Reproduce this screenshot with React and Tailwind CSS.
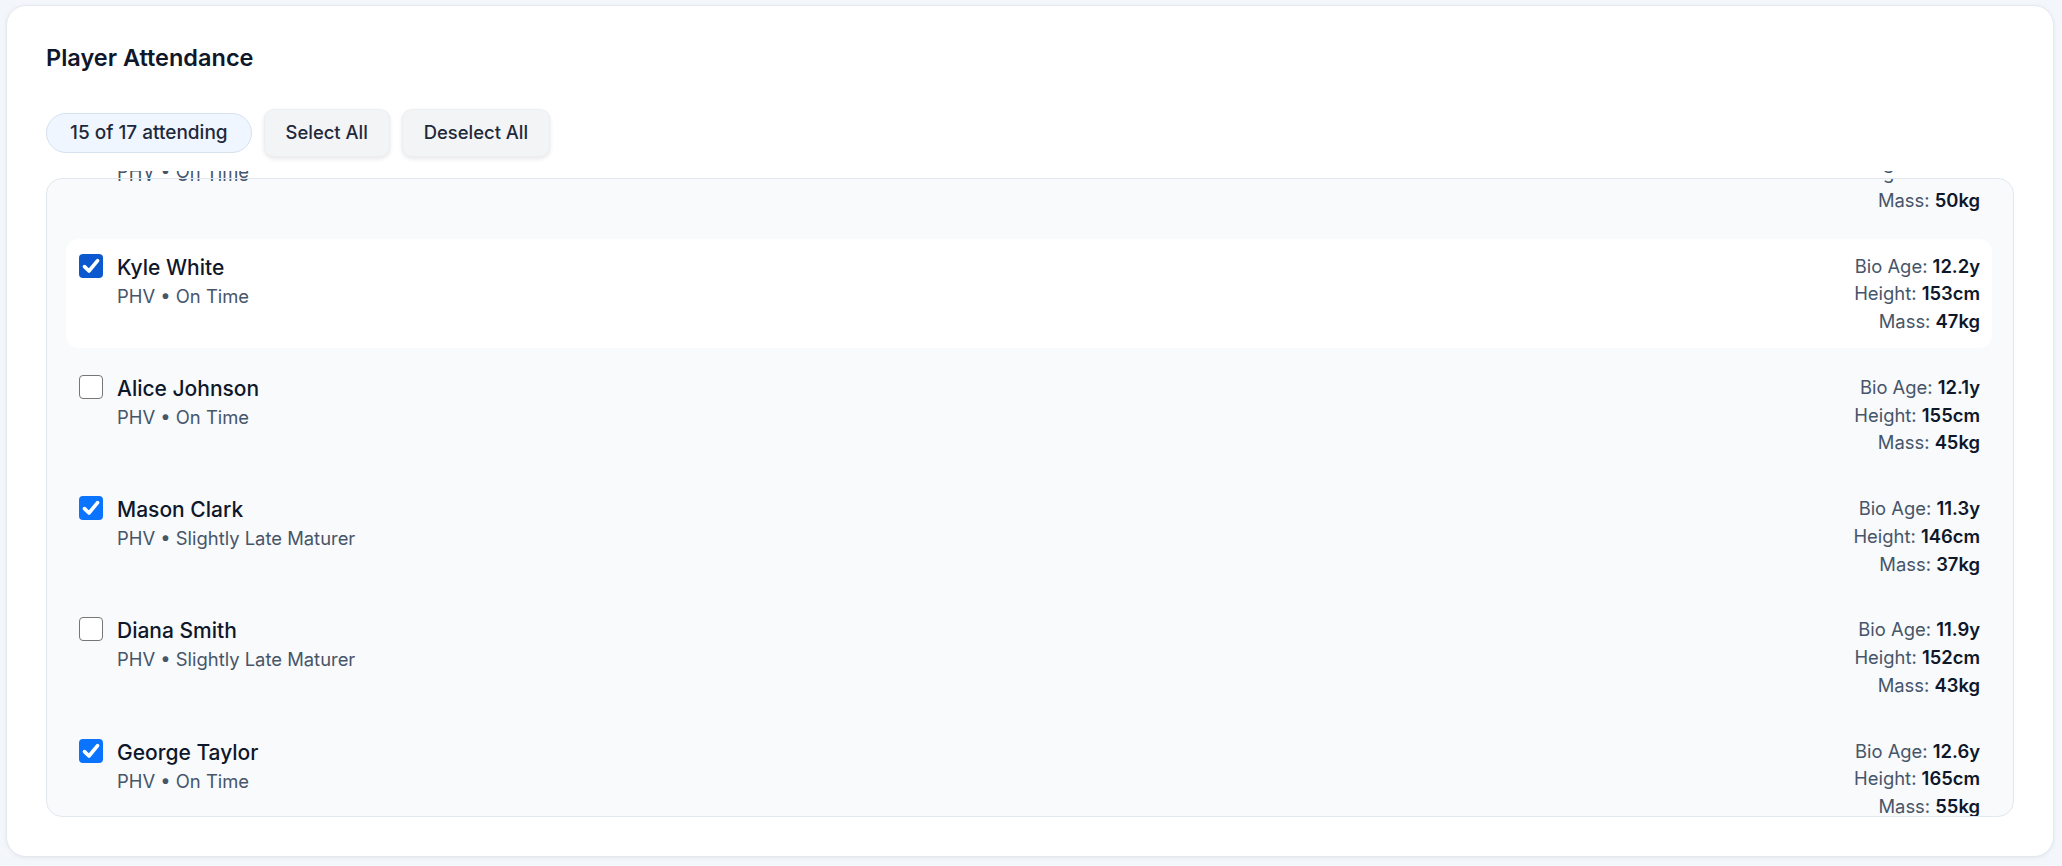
import React from 'react';

const players = [
  { name: 'Ethan Brown', status: 'On Time', age: '12.4y', height: '158cm', mass: '50kg', checked: true },
  { name: 'Kyle White', status: 'On Time', age: '12.2y', height: '153cm', mass: '47kg', checked: true, active: true },
  { name: 'Alice Johnson', status: 'On Time', age: '12.1y', height: '155cm', mass: '45kg', checked: false },
  { name: 'Mason Clark', status: 'Slightly Late Maturer', age: '11.3y', height: '146cm', mass: '37kg', checked: true },
  { name: 'Diana Smith', status: 'Slightly Late Maturer', age: '11.9y', height: '152cm', mass: '43kg', checked: false },
  { name: 'George Taylor', status: 'On Time', age: '12.6y', height: '165cm', mass: '55kg', checked: true },
  { name: 'Noah Wilson', status: 'Early Maturer', age: '12.9y', height: '161cm', mass: '52kg', checked: true },
];

function Checkbox({ checked, active }) {
  if (!checked) {
    return <span className="mt-[1px] block w-[24px] h-[24px] shrink-0 rounded-[4px] border-[1.5px] border-[#767676] bg-white" />;
  }
  return (
    <span className={`mt-[1px] flex w-[24px] h-[24px] shrink-0 items-center justify-center rounded-[4px] ${active ? 'bg-[#0b58cf]' : 'bg-[#0a74ff]'}`}>
      <svg viewBox="0 0 24 24" className="w-[24px] h-[24px]" fill="none">
        <path d="M5.5 12.6 L10 17 L18.6 6.6" stroke="white" strokeWidth="3.6" strokeLinecap="round" strokeLinejoin="round" />
      </svg>
    </span>
  );
}

function Stat({ label, value }) {
  return (
    <div className="leading-[27.7px] text-[18.4px] text-[#475569]">
      {label}: <span className="font-semibold text-[#0f172a]">{value}</span>
    </div>
  );
}

function PlayerRow({ p }) {
  return (
    <div className={`flex h-[109px] shrink-0 items-start justify-between rounded-[13px] pl-[13px] pr-[12px] pt-[14px] ${p.active ? 'bg-white' : ''}`}>
      <div className="flex items-start gap-[14px]">
        <Checkbox checked={p.checked} active={p.active} />
        <div className="flex flex-col">
          <span className="text-[21px] leading-[29px] font-medium text-[#0f172a]">{p.name}</span>
          <span className="text-[18.4px] leading-[28px] text-[#475569]">PHV • {p.status}</span>
        </div>
      </div>
      <div className="flex flex-col items-end">
        <Stat label="Bio Age" value={p.age} />
        <Stat label="Height" value={p.height} />
        <Stat label="Mass" value={p.mass} />
      </div>
    </div>
  );
}

export default function App() {
  const prev = players[0];
  return (
    <div className="min-h-screen bg-[#f3f6fa] pl-[6px] pr-[8px] pt-[5px] pb-[9px] font-[family-name:Inter,'Noto_Sans',sans-serif]">
      <div className="rounded-[20px] border border-[#e3e9f1] bg-white p-[39px] shadow-[0_1px_4px_rgba(15,23,42,0.06)]">
        <h2 className="text-[23.5px] leading-[26px] font-semibold text-[#0f172a]">Player Attendance</h2>

        {/* Controls */}
        <div className="mt-[38px] flex h-[48px] items-center gap-[12px]">
          <span className="flex h-[40px] items-center rounded-full border border-[#d6e1ee] bg-[#eff6ff] px-[23px] text-[19px] font-medium text-[#1e293b]">
            15 of 17 attending
          </span>
          <button className="h-[48px] rounded-[10px] border border-[#eceef2] bg-[#f3f4f6] px-[21px] text-[18.4px] font-medium text-[#1e293b] shadow-[0_2px_4px_rgba(15,23,42,0.1)]">
            Select All
          </button>
          <button className="h-[48px] rounded-[10px] border border-[#eceef2] bg-[#f3f4f6] px-[21px] text-[18.4px] font-medium text-[#1e293b] shadow-[0_2px_4px_rgba(15,23,42,0.1)]">
            Deselect All
          </button>
        </div>

        {/* Scrolled-off tail of the previous row */}
        <div className="mt-[14px] flex h-[7px] items-start justify-between overflow-hidden border-x border-transparent pl-[19px] pr-[21px]">
          <div className="mt-[-14.5px] pl-[51px] text-[18.4px] leading-[28px] text-[#475569]">PHV • {prev.status}</div>
          <div className="mt-[-22px] pr-[12px]">
            <Stat label="Height" value={prev.height} />
          </div>
        </div>

        {/* Player list */}
        <div className="h-[639px] overflow-hidden rounded-[16px] border border-[#e2e8f0] bg-[#f8fafc] pl-[19px] pr-[21px]">
          <div className="mt-[-61.8px] flex flex-col gap-[12.3px]">
            {players.map((p) => (
              <PlayerRow key={p.name} p={p} />
            ))}
          </div>
        </div>
      </div>
    </div>
  );
}
